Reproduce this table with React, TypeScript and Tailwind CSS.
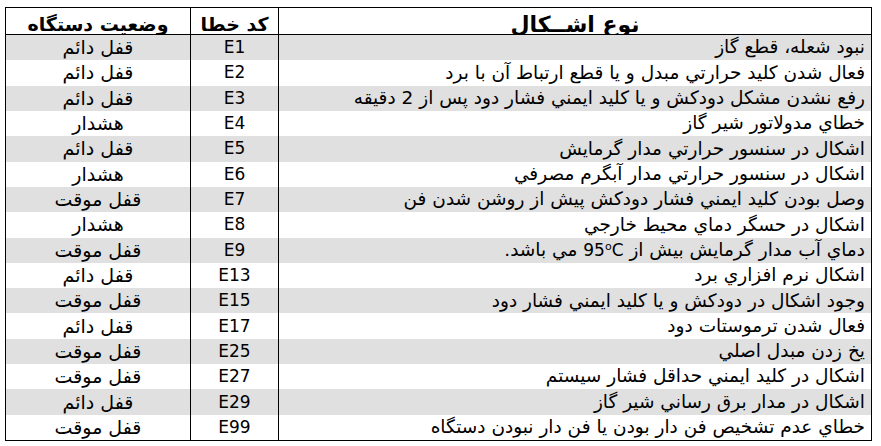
const rows: [string, string, string][] = [
  ["نبود شعله، قطع گاز", "E1", "قفل دائم"],
  ["فعال شدن كليد حرارتي مبدل و يا قطع ارتباط آن با برد", "E2", "قفل دائم"],
  ["رفع نشدن مشكل دودكش و يا كليد ايمني فشار دود پس از 2 دقيقه", "E3", "قفل دائم"],
  ["خطاي مدولاتور شير گاز", "E4", "هشدار"],
  ["اشكال در سنسور حرارتي مدار گرمايش", "E5", "قفل دائم"],
  ["اشكال در سنسور حرارتي مدار آبگرم مصرفي", "E6", "هشدار"],
  ["وصل بودن كليد ايمني فشار دودكش پيش از روشن شدن فن", "E7", "قفل موقت"],
  ["اشكال در حسگر دماي محيط خارجي", "E8", "هشدار"],
  ["__E9__", "E9", "قفل موقت"],
  ["اشكال نرم افزاري برد", "E13", "قفل دائم"],
  ["وجود اشكال در دودكش و يا كليد ايمني فشار دود", "E15", "قفل موقت"],
  ["فعال شدن ترموستات دود", "E17", "قفل دائم"],
  ["يخ زدن مبدل اصلي", "E25", "قفل موقت"],
  ["اشكال در كليد ايمني حداقل فشار سيستم", "E27", "قفل موقت"],
  ["اشكال در مدار برق رساني شير گاز", "E29", "قفل دائم"],
  ["خطاي عدم تشخيص فن دار بودن يا فن دار نبودن دستگاه", "E99", "قفل موقت"],
]

const font = { fontFamily: '"DejaVu Sans", "Noto Sans", sans-serif' }

export default function App() {
  return (
    <div className="bg-white w-[881px] h-[446px] pt-[7px] pl-[5px]" style={font}>
      <div dir="rtl" className="w-[867px] border border-black text-black">
        <div className="grid grid-cols-[592px_89px_184px] h-[27px] border-b border-black text-[19px] font-bold">
          <div className="flex items-center justify-center text-[22px]">نوع اشــكال</div>
          <div className="flex items-center justify-center border-r border-l border-black">كد خطا</div>
          <div className="flex items-center justify-center">وضعیت دستگاه</div>
        </div>
        <div className="grid grid-rows-[repeat(16,1fr)] h-[405px] text-[18.5px] leading-none">
          {rows.map(([fault, code, status], i) => (
            <div
              key={code}
              className={`grid grid-cols-[592px_89px_184px] ${i % 2 === 0 ? "bg-[#e0e0e0]" : "bg-white"}`}
            >
              <div className="flex items-center pr-[6px] whitespace-nowrap">
                {fault === "__E9__" ? (
                  <span>
                    دماي آب مدار گرمايش بيش از{" "}
                    <bdi dir="ltr" className="text-[17px]">
                      95<sup className="text-[11px]">o</sup>C
                    </bdi>{" "}
                    مي باشد.
                  </span>
                ) : (
                  fault
                )}
              </div>
              <div className="flex items-center justify-center border-r border-l border-black text-[17px]">{code}</div>
              <div className="flex items-center justify-center text-[19px]">{status}</div>
            </div>
          ))}
        </div>
      </div>
    </div>
  )
}
